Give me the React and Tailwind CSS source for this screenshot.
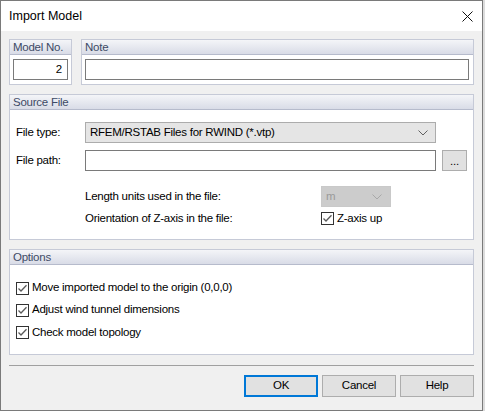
import React from "react";

const FONT = { fontFamily: '"Liberation Sans", Arial, sans-serif' };
const T = "text-[11.5px] tracking-[-0.25px]";

function Group({ title, className = "", children }) {
  return (
    <div className={"border border-[#c6cad7] bg-white flex flex-col " + className}>
      <div className={"h-[15px] bg-gradient-to-b from-[#f4f5f8] to-[#d9dce7] border-b border-[#b6bbcc] text-[#3d4a66] leading-[15px] pl-[3px] " + T}>
        {title}
      </div>
      {children}
    </div>
  );
}

function Check({ label }) {
  return (
    <div className="flex items-center gap-[3px]">
      <svg width="13" height="13" viewBox="0 0 13 13" className="shrink-0">
        <rect x="0.5" y="0.5" width="12" height="12" fill="#fff" stroke="#333" />
        <path d="M2.5 6.5 L5 9 L10.5 3.2" fill="none" stroke="#5a5a5a" strokeWidth="1.3" />
      </svg>
      <span className={T + " text-black"}>{label}</span>
    </div>
  );
}

function Chevron({ color }) {
  return (
    <svg width="10" height="6" viewBox="0 0 10 6">
      <path d="M0.5 0.5 L5 5 L9.5 0.5" fill="none" stroke={color} strokeWidth="1" />
    </svg>
  );
}

function Btn({ children, primary }) {
  return (
    <div
      className={
        "w-[74px] h-[22px] flex items-center justify-center text-black bg-[#e1e1e1] " + T + " " +
        (primary ? "border-2 border-[#0078d7]" : "border border-[#adadad]")
      }
    >
      {children}
    </div>
  );
}

export default function App() {
  return (
    <div className="w-[485px] h-[411px] bg-[#dcdcdc] flex" style={FONT}>
      <div className="w-[483px] h-[411px] border border-[#7a7a7a] bg-[#f0f0f0] flex flex-col">
        <div className="h-[30px] bg-white flex items-center justify-between pl-[8px] pr-[8px] shrink-0">
          <span className="text-[12.5px] text-black">Import Model</span>
          <svg width="11" height="11" viewBox="0 0 11 11" className="mr-[1px]">
            <path d="M0.5 0.5 L10.5 10.5 M10.5 0.5 L0.5 10.5" stroke="#111" strokeWidth="1" />
          </svg>
        </div>

        <div className="px-[8px] pt-[8px] flex flex-col flex-1">
          {/* Row 1 */}
          <div className="flex gap-[9px]">
            <Group title="Model No." className="w-[63px]">
              <div className="px-[3px] pt-[4px] pb-[4px]">
                <div className={"h-[21px] border border-[#7a7a7a] bg-white text-black flex items-center justify-end pr-[5px] " + T}>
                  2
                </div>
              </div>
            </Group>
            <Group title="Note" className="flex-1">
              <div className="pl-[3px] pr-[4px] pt-[4px] pb-[4px]">
                <div className="h-[21px] border border-[#7a7a7a] bg-white" />
              </div>
            </Group>
          </div>

          {/* Source File */}
          <Group title="Source File" className="mt-[9px]">
            <div className="px-[6px] pt-[12px] pb-[14px] flex flex-col">
              <div className="flex items-center h-[21px]">
                <span className={"w-[69px] text-black " + T}>File type:</span>
                <div className="w-[351px] h-[21px] border border-[#acacac] bg-[#e5e5e5] flex items-center justify-between pl-[4px] pr-[7px]">
                  <span className={"text-black " + T}>RFEM/RSTAB Files for RWIND (*.vtp)</span>
                  <Chevron color="#606060" />
                </div>
              </div>
              <div className="flex items-center h-[21px] mt-[7px]">
                <span className={"w-[69px] text-black " + T}>File path:</span>
                <div className="w-[351px] h-[21px] border border-[#7a7a7a] bg-white" />
                <div className={"ml-[6px] w-[25px] h-[21px] border border-[#adadad] bg-[#e1e1e1] flex items-center justify-center text-black leading-none pt-[3px] " + T}>
                  ...
                </div>
              </div>
              <div className="flex items-center h-[21px] mt-[15px] pl-[69px]">
                <span className={"w-[236px] text-black " + T}>Length units used in the file:</span>
                <div className="w-[70px] h-[21px] border border-[#c9c9c9] bg-[#cccccc] flex items-center justify-between pl-[4px] pr-[8px]">
                  <span className={"text-[#9a9a9a] " + T}>m</span>
                  <Chevron color="#a8a8a8" />
                </div>
              </div>
              <div className="flex items-center h-[13px] mt-[5px] pl-[69px]">
                <span className={"w-[236px] text-black " + T}>Orientation of Z-axis in the file:</span>
                <Check label="Z-axis up" />
              </div>
            </div>
          </Group>

          {/* Options */}
          <Group title="Options" className="mt-[9px]">
            <div className="px-[6px] pt-[12px] pb-[10px] flex flex-col">
              <div className="h-[22px] flex items-center">
                <Check label="Move imported model to the origin (0,0,0)" />
              </div>
              <div className="h-[22px] flex items-center">
                <Check label="Adjust wind tunnel dimensions" />
              </div>
              <div className="h-[23px] flex items-center">
                <Check label="Check model topology" />
              </div>
            </div>
          </Group>

          <div className="mt-[10px] h-[1px] bg-[#a0a0a0]" />

          <div className="mt-[9px] flex justify-end gap-[4px]">
            <Btn primary>OK</Btn>
            <Btn>Cancel</Btn>
            <Btn>Help</Btn>
          </div>
        </div>
      </div>
    </div>
  );
}
